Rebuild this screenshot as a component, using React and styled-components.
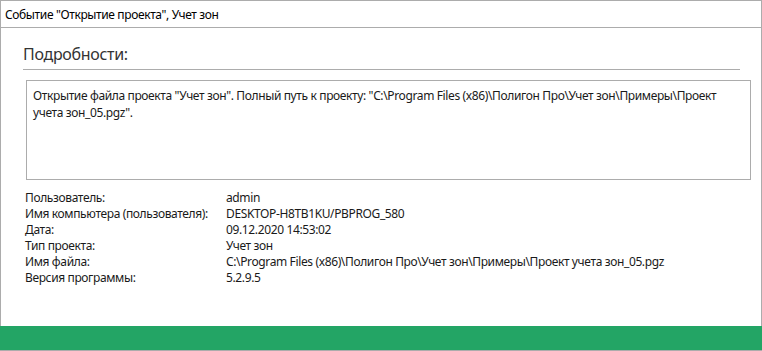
import React from "react";
import styled, { createGlobalStyle } from "styled-components";

const Global = createGlobalStyle`
  html, body { margin: 0; padding: 0; background: #ffffff; }
  body { font-family: "Noto Sans", "Open Sans", sans-serif; }
  * { box-sizing: border-box; }
`;

const Window = styled.div`
  width: 762px;
  height: 351px;
  border: 1px solid #acacac;
  display: flex;
  flex-direction: column;
  background: #ffffff;
  color: #1a1a1a;
  font-size: 12px;
  letter-spacing: -0.37px;
`;

const TitleBar = styled.div`
  height: 27px;
  flex: 0 0 27px;
  border-bottom: 1px solid #acacac;
  display: flex;
  align-items: center;
  padding-left: 4px;
  font-size: 12px;
  color: #000;
`;

const Content = styled.div`
  flex: 1;
  display: flex;
  flex-direction: column;
  padding: 16px 0 0 22px;
`;

const Heading = styled.div`
  height: 26px;
  margin-right: 21px;
  border-bottom: 1px solid #acacac;
  font-size: 16px;
  line-height: 20px;
  letter-spacing: -0.3px;
  color: #333;
`;

const DescBox = styled.div`
  margin: 10px 10px 0 3px;
  height: 100px;
  border: 1px solid #acacac;
  padding: 6px 6px;
  line-height: 17px;
  color: #1a1a1a;
`;

const InfoGrid = styled.div`
  margin: 10px 0 0 2px;
  display: grid;
  grid-template-columns: 201px 1fr;
  line-height: 16px;
  color: #1a1a1a;
`;

const Footer = styled.div`
  flex: 0 0 24px;
  height: 24px;
  margin: 0 -1px;
  background: #23a565;
`;

const rows = [
  ["Пользователь:", "admin"],
  ["Имя компьютера (пользователя):", "DESKTOP-H8TB1KU/PBPROG_580"],
  ["Дата:", "09.12.2020 14:53:02"],
  ["Тип проекта:", "Учет зон"],
  ["Имя файла:", "C:\\Program Files (x86)\\Полигон Про\\Учет зон\\Примеры\\Проект учета зон_05.pgz"],
  ["Версия программы:", "5.2.9.5"],
];

export default function App() {
  return (
    <>
      <Global />
      <Window>
        <TitleBar>Событие "Открытие проекта", Учет зон</TitleBar>
        <Content>
          <Heading>Подробности:</Heading>
          <DescBox>
            Открытие файла проекта "Учет зон". Полный путь к проекту: "C:\Program Files (x86)\Полигон Про\Учет зон\Примеры\Проект учета зон_05.pgz".
          </DescBox>
          <InfoGrid>
            {rows.map(([k, v]) => (
              <React.Fragment key={k}>
                <span>{k}</span>
                <span>{v}</span>
              </React.Fragment>
            ))}
          </InfoGrid>
        </Content>
        <Footer />
      </Window>
    </>
  );
}
